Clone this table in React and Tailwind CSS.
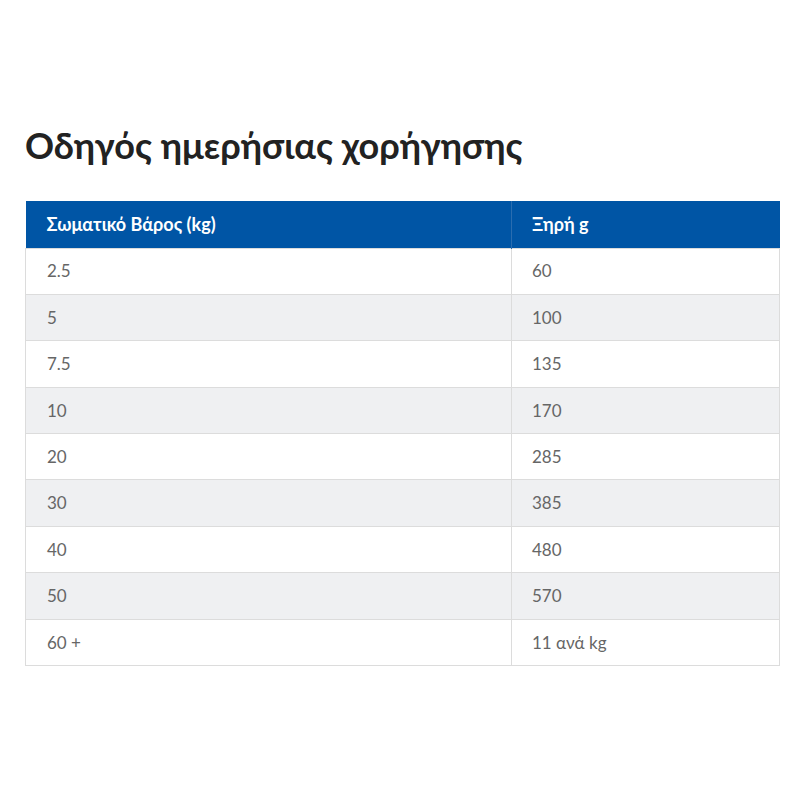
import React from 'react';

const rows = [
  ['2.5', '60'],
  ['5', '100'],
  ['7.5', '135'],
  ['10', '170'],
  ['20', '285'],
  ['30', '385'],
  ['40', '480'],
  ['50', '570'],
  ['60 +', '11 ανά kg'],
];

const App = () => {
  return (
    <div className="w-[800px] h-[800px] bg-white pt-[121px] px-[25px] font-['Lato','Noto_Sans',sans-serif]">
      <h1 className="text-[36px] leading-[48px] font-bold text-[#222] mb-[32px]">Οδηγός ημερήσιας χορήγησης</h1>
      <table className="w-[755px] border-collapse text-[17px]">
        <thead>
          <tr className="bg-[#0055a5] text-white">
            <th className="h-[47px] w-[486px] text-left font-bold text-[18px] pl-[21px] border-r border-[#2a6db0]">Σωματικό Βάρος (kg)</th>
            <th className="h-[47px] text-left font-bold text-[18px] pl-[20px]">Ξηρή g</th>
          </tr>
        </thead>
        <tbody>
          {rows.map((r, i) => (
            <tr key={i} className={i % 2 === 1 ? 'bg-[#eff0f2]' : 'bg-white'}>
              <td className="h-[46.4px] pl-[21px] text-[#666] border border-[#dcdcdc]">{r[0]}</td>
              <td className="h-[46.4px] pl-[20px] text-[#666] border border-[#dcdcdc]">{r[1]}</td>
            </tr>
          ))}
        </tbody>
      </table>
    </div>
  );
};

export default App;
